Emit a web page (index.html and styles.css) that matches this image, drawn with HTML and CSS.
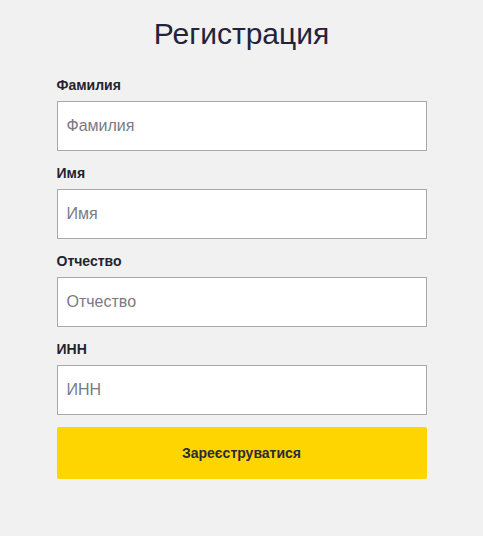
FILE: index.html
```html
<!DOCTYPE html>
<html lang="ru">
<head>
<meta charset="utf-8">
<title>Регистрация</title>
<link rel="stylesheet" href="styles.css">
</head>
<body>
<main class="page">
  <h1 class="title">Регистрация</h1>
  <form class="form">
    <div class="field">
      <label class="label" for="f1">Фамилия</label>
      <input class="input" id="f1" type="text" placeholder="Фамилия">
    </div>
    <div class="field">
      <label class="label" for="f2">Имя</label>
      <input class="input" id="f2" type="text" placeholder="Имя">
    </div>
    <div class="field">
      <label class="label" for="f3">Отчество</label>
      <input class="input" id="f3" type="text" placeholder="Отчество">
    </div>
    <div class="field">
      <label class="label" for="f4">ИНН</label>
      <input class="input" id="f4" type="text" placeholder="ИНН">
    </div>
    <button class="button" type="button">Зареєструватися</button>
  </form>
</main>
</body>
</html>
```
FILE: styles.css
```css
html, body {
  margin: 0;
  padding: 0;
  background: #f1f1f1;
}
body {
  font-family: "Liberation Sans", Arial, sans-serif;
  color: #23232f;
}
.page {
  width: 370px;
  margin: 0 auto;
  padding-top: 15px;
}
.title {
  margin: 0 0 25px;
  font-size: 30px;
  font-weight: 400;
  line-height: 37px;
  text-align: center;
  color: #23233a;
}
.form {
  display: flex;
  flex-direction: column;
}
.field {
  display: flex;
  flex-direction: column;
  margin-bottom: 14px;
}
.field:nth-child(4) {
  margin-bottom: 12px;
}
.label {
  font-size: 14px;
  font-weight: 700;
  line-height: 16px;
  margin-bottom: 8px;
  color: #23232f;
}
.input {
  box-sizing: border-box;
  height: 50px;
  width: 100%;
  margin: 0;
  padding: 0 9px;
  border: 1px solid #a9a9a9;
  border-radius: 0;
  background: #fff;
  font-family: "Liberation Sans", Arial, sans-serif;
  font-size: 16px;
  color: #333;
  outline: none;
}
.input::placeholder {
  color: #7a7a82;
  opacity: 1;
}
.button {
  box-sizing: border-box;
  height: 52px;
  width: 100%;
  border: none;
  border-radius: 2px;
  background: #ffd500;
  font-family: "Liberation Sans", Arial, sans-serif;
  font-size: 14px;
  font-weight: 700;
  color: #2a2a38;
  cursor: pointer;
}
```
